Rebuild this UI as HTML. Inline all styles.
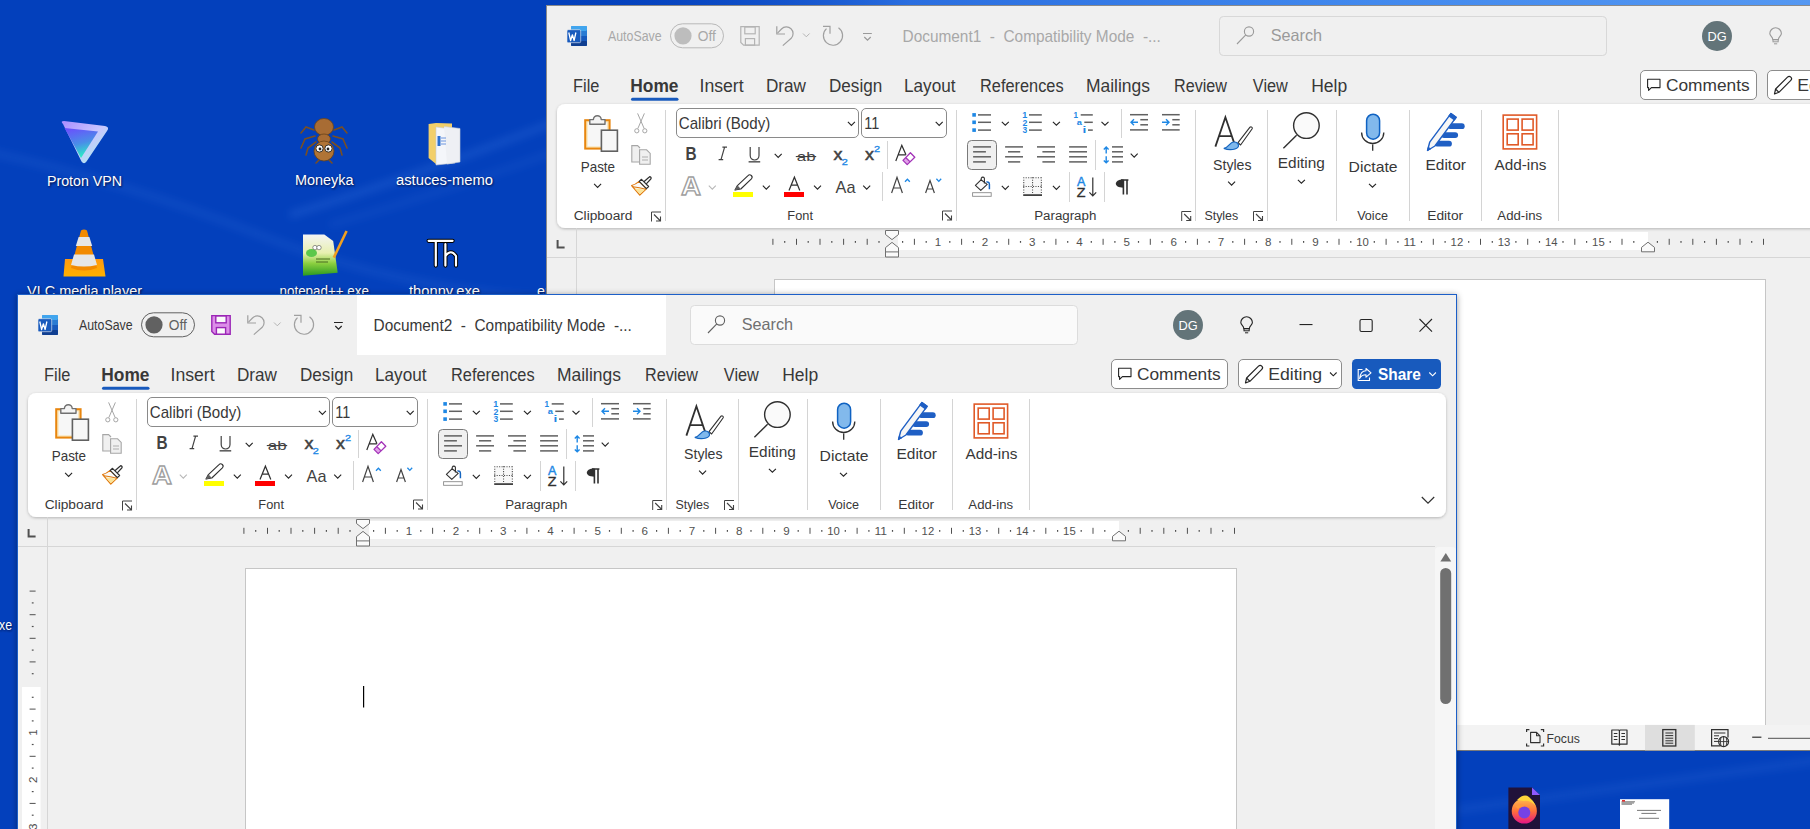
<!DOCTYPE html>
<html><head><meta charset="utf-8">
<style>
html,body{margin:0;padding:0;width:1810px;height:829px;overflow:hidden;}
body{position:relative;background:#0240ba;font-family:"Liberation Sans",sans-serif;}
#desk{position:absolute;left:0;top:0;width:1810px;height:829px;
 background:#0340bc;}
svg{position:absolute;left:0;top:0;}
text{font-family:"Liberation Sans",sans-serif;}
</style></head><body>
<div id="desk"></div>
<svg width="1810" height="829" viewBox="0 0 1810 829">
<defs>
<filter id="rsh" x="-5%" y="-20%" width="110%" height="140%"><feDropShadow dx="0" dy="1" stdDeviation="1.5" flood-color="#000" flood-opacity="0.25"/></filter>
<filter id="wsh" x="-5%" y="-5%" width="110%" height="110%"><feDropShadow dx="0" dy="1" stdDeviation="3" flood-color="#000" flood-opacity="0.4"/></filter>
<filter id="streak" x="-20%" y="-50%" width="140%" height="200%"><feGaussianBlur stdDeviation="4"/></filter>
<filter id="tsh" x="-10%" y="-40%" width="120%" height="180%"><feGaussianBlur stdDeviation="0.9"/></filter>
<linearGradient id="pv1" x1="0" y1="0" x2="1" y2="1"><stop offset="0" stop-color="#a98cff"/><stop offset="0.5" stop-color="#c9c6ff"/><stop offset="1" stop-color="#9ff5e6"/></linearGradient>
<linearGradient id="pv2" x1="0" y1="0" x2="0.3" y2="1"><stop offset="0" stop-color="#6d4aff"/><stop offset="0.6" stop-color="#4a8ee8"/><stop offset="1" stop-color="#2ce8c8"/></linearGradient>
<linearGradient id="vlc1" x1="0" y1="0" x2="0" y2="1"><stop offset="0" stop-color="#ff9a10"/><stop offset="1" stop-color="#ffb000"/></linearGradient>
<linearGradient id="npp" x1="0" y1="0" x2="0" y2="1"><stop offset="0" stop-color="#f4f4f4"/><stop offset="0.45" stop-color="#e8f0b0"/><stop offset="0.7" stop-color="#8cd040"/><stop offset="1" stop-color="#2a9a20"/></linearGradient>
<linearGradient id="ff1" x1="0" y1="0" x2="0" y2="1"><stop offset="0" stop-color="#ffbd4f"/><stop offset="0.5" stop-color="#ff7139"/><stop offset="1" stop-color="#e31587"/></linearGradient>
<radialGradient id="deskhi" cx="1810" cy="0" r="1250" gradientUnits="userSpaceOnUse" gradientTransform="translate(1810 0) scale(1 0.55) translate(-1810 0)"><stop offset="0" stop-color="#5598f2"/><stop offset="0.35" stop-color="#4289ee"/><stop offset="0.72" stop-color="#2a6ee0"/><stop offset="1" stop-color="#0642c0" stop-opacity="0"/></radialGradient>
<clipPath id="backclip"><rect x="547" y="6" width="1263" height="745"/></clipPath>
<clipPath id="frontclip"><rect x="18" y="295" width="1438" height="534"/></clipPath>
<g id="common">
<rect x="18" y="295" width="1438" height="900" fill="#f0f0f0"/>
<rect x="28" y="393" width="1418" height="124" rx="8" fill="#ffffff" filter="url(#rsh)"/>
<rect x="369" y="521" width="750" height="18" fill="#ffffff"/>
<rect x="18" y="546" width="1417" height="1" fill="#d6d6d6"/>
<rect x="47" y="517" width="1" height="600" fill="#d6d6d6"/>
<rect x="245.5" y="568.5" width="991" height="700" fill="#ffffff" stroke="#c6c6c6" stroke-width="1"/>
<rect x="42" y="315" width="16" height="20" rx="1.5" fill="#185abd"/>
<rect x="42" y="315" width="16" height="5" rx="1" fill="#41a5ee"/>
<rect x="42" y="320" width="16" height="5" fill="#2b7cd3"/>
<rect x="42" y="330" width="16" height="5" rx="1" fill="#103f91"/>
<rect x="38" y="318.7" width="13.7" height="13" rx="1.2" fill="#185abd" stroke="#f0f0f0" stroke-width="0.6"/>
<path d="M39.8 321.5 L41.6 329.5 L43.4 323.8 L45.1 329.5 L46.9 321.5" fill="none" stroke="#fff" stroke-width="1.3" stroke-linejoin="round"/>
<path d="M247.8 315.3 V323 H256" fill="none" stroke="#a0a0a0" stroke-width="1.2"/>
<path d="M248.5 322.2 L252.5 318 A6.6 6.6 0 0 1 262.2 327.3 L253.8 334.6" fill="none" stroke="#a0a0a0" stroke-width="1.2"/>
<path d="M274 322.5 L277.3 325.8 L280.6 322.5" fill="none" stroke="#b4b4b4" stroke-width="1"/>
<path d="M309.5 316.8 A9.6 9.6 0 1 1 297.5 317.6" fill="none" stroke="#a0a0a0" stroke-width="1.2"/>
<path d="M294 315.4 H301 V322.8" fill="none" stroke="#a0a0a0" stroke-width="1.2"/>
<rect x="690.5" y="305.5" width="387" height="39" rx="4" fill="#fafafa" stroke="#dcdcdc" stroke-width="1"/>
<circle cx="720" cy="320.5" r="4.6" fill="none" stroke="#616161" stroke-width="1.1"/>
<path d="M716.8 323.8 L708 333" fill="none" stroke="#616161" stroke-width="1.1"/>
<text x="741.663483953377" y="330" font-size="16.72" fill="#707070" textLength="51.4" lengthAdjust="spacingAndGlyphs">Search</text>
<circle cx="1188" cy="325" r="15" fill="#637479"/>
<text x="1178.5496183206105" y="330.1" font-size="13.37" fill="#ffffff" textLength="19.2" lengthAdjust="spacingAndGlyphs">DG</text>
<text x="44.05754685958566" y="381" font-size="17.44" fill="#383838" textLength="26.4" lengthAdjust="spacingAndGlyphs">File</text>
<text x="101.34063468903885" y="381" font-size="17.44" fill="#383838" font-weight="700" textLength="48.2" lengthAdjust="spacingAndGlyphs">Home</text>
<text x="170.47055713704756" y="381" font-size="17.44" fill="#383838" textLength="44.2" lengthAdjust="spacingAndGlyphs">Insert</text>
<text x="236.99514731369152" y="381" font-size="17.44" fill="#383838" textLength="40.0" lengthAdjust="spacingAndGlyphs">Draw</text>
<text x="299.9976950938426" y="381" font-size="17.44" fill="#383838" textLength="53.2" lengthAdjust="spacingAndGlyphs">Design</text>
<text x="374.99202145491114" y="381" font-size="17.44" fill="#383838" textLength="51.5" lengthAdjust="spacingAndGlyphs">Layout</text>
<text x="451.0600723291956" y="381" font-size="17.44" fill="#383838" textLength="83.5" lengthAdjust="spacingAndGlyphs">References</text>
<text x="556.9672627235213" y="381" font-size="17.44" fill="#383838" textLength="64.1" lengthAdjust="spacingAndGlyphs">Mailings</text>
<text x="644.9743589743589" y="381" font-size="17.44" fill="#383838" textLength="53.0" lengthAdjust="spacingAndGlyphs">Review</text>
<text x="723.8289740698985" y="381" font-size="17.44" fill="#383838" textLength="35.0" lengthAdjust="spacingAndGlyphs">View</text>
<text x="782.1653360282971" y="381" font-size="17.44" fill="#383838" textLength="36.0" lengthAdjust="spacingAndGlyphs">Help</text>
<rect x="102" y="386.8" width="47.5" height="3" rx="1.5" fill="#185abd"/>
<rect x="1111.5" y="359.5" width="116" height="29" rx="4.5" fill="#ffffff" stroke="#8c8c8c" stroke-width="1"/>
<path d="M1118.6 368.2 H1131 V376.6 H1122.4 L1119.6 379.4 V376.6 H1118.6 Z" fill="none" stroke="#242424" stroke-width="1.1" stroke-linejoin="round"/>
<text x="1136.920765195927" y="379.5" font-size="15.99" fill="#383838" textLength="83.7" lengthAdjust="spacingAndGlyphs">Comments</text>
<rect x="1238.5" y="359.5" width="103" height="29" rx="4.5" fill="#ffffff" stroke="#8c8c8c" stroke-width="1"/>
<path d="M1245.5 383 L1246.6 378 L1258.5 366.1 A2.3 2.3 0 0 1 1261.8 369.4 L1249.9 381.3 Z M1246.6 378 L1249.9 381.3" fill="none" stroke="#242424" stroke-width="1.2" stroke-linejoin="round"/>
<text x="1268.151626970815" y="379.5" font-size="15.99" fill="#383838" textLength="54.0" lengthAdjust="spacingAndGlyphs">Editing</text>
<path d="M1330 372.5 L1333.3 375.8 L1336.6 372.5" fill="none" stroke="#242424" stroke-width="1.1"/>
<rect x="56.2" y="409.2" width="24.4" height="28.4" fill="#fbe3b0" stroke="#e8860f" stroke-width="2"/>
<rect x="58.6" y="411.4" width="19.6" height="24" fill="#f7f7f7"/>
<path d="M60.8 413.2 V408.6 H64.4 A3.9 3.9 0 0 1 72.2 408.6 H76 V413.2 Z" fill="#f4f4f4" stroke="#707070" stroke-width="1.4" stroke-linejoin="round"/>
<rect x="72.4" y="419.2" width="16" height="21" fill="#f7f7f7" stroke="#616161" stroke-width="1.6"/>
<text x="51.6964242667738" y="460.7" font-size="14.97" fill="#383838" textLength="34.4" lengthAdjust="spacingAndGlyphs">Paste</text>
<path d="M65.1 472.9 L68.6 476.4 L72.1 472.9" fill="none" stroke="#242424" stroke-width="1.1"/>
<path d="M108.6 402.4 L115.2 417.6 M115.4 402.4 L108.8 417.6" fill="none" stroke="#a6a6a6" stroke-width="1"/>
<circle cx="107.8" cy="419.8" r="2.1" fill="none" stroke="#a6a6a6" stroke-width="1"/>
<circle cx="115.8" cy="419.8" r="2.1" fill="none" stroke="#a6a6a6" stroke-width="1"/>
<path d="M110 451 H102.8 V434.6 H108.6 L111 437" fill="#f0f0f0" stroke="#a6a6a6" stroke-width="1.1"/>
<path d="M110.6 438.8 H117.6 L121.2 442.4 V453.2 H110.6 Z" fill="#f0f0f0" stroke="#a6a6a6" stroke-width="1.1"/>
<path d="M113 446 H119 M113 449 H119" fill="none" stroke="#a6a6a6" stroke-width="0.9"/>
<path d="M110.2 470.4 Q106.4 473.6 102.6 474.5 L110.8 484 L117.4 477.7 Z" fill="#fafafa" stroke="#e07a10" stroke-width="1.2" stroke-linejoin="round"/>
<path d="M105.6 477.4 L110.8 483.2 L116 478.8 Q110.6 477.4 105.6 477.4 Z" fill="#fbe49a"/>
<path d="M103.8 475.8 Q110.4 476.6 117 478.2" fill="none" stroke="#e07a10" stroke-width="1.1"/>
<path d="M114.9 470.8 L120 466.2 A1.2 1.2 0 0 1 121.8 468 L117.3 472.8" fill="#ffffff" stroke="#303030" stroke-width="1.2" stroke-linejoin="round"/>
<path d="M110.2 470.4 L112.5 468.3 L119.6 475.5 L117.4 477.7 Z" fill="#ffffff" stroke="#303030" stroke-width="1.2" stroke-linejoin="round"/>
<text x="44.702602579132474" y="508.7" font-size="13.08" fill="#383838" textLength="58.8" lengthAdjust="spacingAndGlyphs">Clipboard</text>
<path d="M122.5 510.5 V501.0 H132" fill="none" stroke="#424242" stroke-width="1"/><path d="M125 503.5 L131.5 510.0 M127 510.0 H131.5 V505.5" fill="none" stroke="#424242" stroke-width="1.1"/>
<rect x="136" y="399" width="1" height="111" fill="#d4d4d4"/>
<rect x="147.5" y="397.5" width="182" height="29" rx="4.5" fill="#ffffff" stroke="#8a8a8a" stroke-width="1"/>
<text x="149.73285690816493" y="418.2" font-size="15.70" fill="#383838" textLength="91.5" lengthAdjust="spacingAndGlyphs">Calibri (Body)</text>
<path d="M318.9 410.9 L322.4 414.4 L325.9 410.9" fill="none" stroke="#242424" stroke-width="1.1"/>
<rect x="332.5" y="397.5" width="85" height="29" rx="4.5" fill="#ffffff" stroke="#8a8a8a" stroke-width="1"/>
<text x="335.37388724035605" y="418.2" font-size="15.70" fill="#383838" textLength="15.0" lengthAdjust="spacingAndGlyphs">11</text>
<path d="M406.7 410.9 L410.2 414.4 L413.7 410.9" fill="none" stroke="#242424" stroke-width="1.1"/>
<text x="156.5689351481185" y="448.7" font-size="18.02" fill="#424242" font-weight="700" textLength="11.1" lengthAdjust="spacingAndGlyphs">B</text>
<path d="M193.4 436.2 H198 M189.6 448.6 H194.2 M195.6 436.2 L192 448.6" fill="none" stroke="#424242" stroke-width="1.2"/>
<path d="M221.2 436 V444.6 A4.4 4.4 0 0 0 230 444.6 V436" fill="none" stroke="#424242" stroke-width="1.2"/>
<rect x="219.6" y="450" width="11.6" height="1.6" fill="#616161"/>
<path d="M245.7 442.9 L249.2 446.4 L252.7 442.9" fill="none" stroke="#242424" stroke-width="1.1"/>
<text x="267.88085510688836" y="450" font-size="13.37" fill="#424242" textLength="18.8" lengthAdjust="spacingAndGlyphs">ab</text>
<rect x="266.8" y="445" width="20.4" height="1.1" fill="#424242"/>
<text x="304.5979570990807" y="448.8" font-size="17.01" fill="#424242" textLength="9.0" lengthAdjust="spacingAndGlyphs" stroke="#424242" stroke-width="0.5">x</text>
<text x="312.64801714898175" y="453.8" font-size="8.43" fill="#1e88e5" textLength="6.1" lengthAdjust="spacingAndGlyphs" stroke="#1e88e5" stroke-width="0.3">2</text>
<text x="335.9979570990807" y="448.8" font-size="17.01" fill="#424242" textLength="9.0" lengthAdjust="spacingAndGlyphs" stroke="#424242" stroke-width="0.5">x</text>
<text x="344.94801714898176" y="440.6" font-size="8.43" fill="#1e88e5" textLength="6.1" lengthAdjust="spacingAndGlyphs" stroke="#1e88e5" stroke-width="0.3">2</text>
<rect x="358" y="430" width="1" height="28" fill="#d4d4d4"/>
<path d="M366.8 450 L372.8 434.4 L377 443.8 M369.4 443.8 H376.8" fill="none" stroke="#303030" stroke-width="1.2"/>
<path d="M374 449.4 L376.9 446.7 L380.9 450.6 L378.2 453.6 Z" fill="#e2a2ea"/>
<path d="M381.4 441.8 L385.8 446.2 L378.2 453.6 L374 449.4 Z M376.9 446.7 L380.9 450.6" fill="none" stroke="#a333b8" stroke-width="1.3" stroke-linejoin="round"/>
<text x="152.10960698689956" y="484.2" font-size="25.58" fill="#ffffff" font-weight="700" textLength="20.0" lengthAdjust="spacingAndGlyphs" stroke="#9e9e9e" stroke-width="1.3">A</text>
<path d="M179.8 474.6 L183.3 478.1 L186.8 474.6" fill="none" stroke="#b8b8b8" stroke-width="1.1"/>
<path d="M206 479 L208.4 474.6 L219 464.6 A1.9 1.9 0 0 1 222.4 467.8 L211.8 478 Z" fill="#ffffff" stroke="#303030" stroke-width="1.1" stroke-linejoin="round"/>
<path d="M205.4 479.6 L208.6 474.6 L211.6 477.8 Z" fill="#616161"/>
<rect x="204" y="481" width="20" height="5" fill="#ffff00"/>
<path d="M233.8 474.6 L237.3 478.1 L240.8 474.6" fill="none" stroke="#242424" stroke-width="1.1"/>
<path d="M260 479.4 L265.4 466.2 L270.8 479.4 M262.2 474.2 H268.6" fill="none" stroke="#303030" stroke-width="1.2"/>
<rect x="255" y="481" width="20" height="5" fill="#ff0000"/>
<path d="M285.0 474.6 L288.5 478.1 L292.0 474.6" fill="none" stroke="#242424" stroke-width="1.1"/>
<text x="306.56817273090763" y="482" font-size="17.15" fill="#424242" textLength="19.9" lengthAdjust="spacingAndGlyphs">Aa</text>
<path d="M334.2 474.6 L337.7 478.1 L341.2 474.6" fill="none" stroke="#242424" stroke-width="1.1"/>
<rect x="353" y="461" width="1" height="29" fill="#d4d4d4"/>
<path d="M362.6 482 L368 466.4 L373.4 482 M364.6 477 H371.4" fill="none" stroke="#424242" stroke-width="1.2"/>
<path d="M376 470.8 L378.4 468.2 L380.8 470.8" fill="none" stroke="#1e88e5" stroke-width="1.3"/>
<path d="M396.6 482 L401 469.6 L405.4 482 M398.2 478 H403.8" fill="none" stroke="#424242" stroke-width="1.2"/>
<path d="M407.4 467.8 L409.8 470.4 L412.2 467.8" fill="none" stroke="#1e88e5" stroke-width="1.3"/>
<text x="258.3486590038314" y="509" font-size="13.08" fill="#383838" textLength="25.6" lengthAdjust="spacingAndGlyphs">Font</text>
<path d="M413.5 509.5 V500.0 H423" fill="none" stroke="#424242" stroke-width="1"/><path d="M416 502.5 L422.5 509.0 M418 509.0 H422.5 V504.5" fill="none" stroke="#424242" stroke-width="1.1"/>
<rect x="427" y="399" width="1" height="111" fill="#d4d4d4"/>
<rect x="443.3" y="402.1" width="3.6" height="3.6" fill="#1e88e5"/>
<rect x="449" y="403.15" width="13.00" height="1.5" fill="#616161"/>
<rect x="443.3" y="409.5" width="3.6" height="3.6" fill="#1e88e5"/>
<rect x="449" y="410.55" width="13.00" height="1.5" fill="#616161"/>
<rect x="443.3" y="417.3" width="3.6" height="3.6" fill="#1e88e5"/>
<rect x="449" y="418.35" width="13.00" height="1.5" fill="#616161"/>
<path d="M472.8 410.8 L476.3 414.2 L479.8 410.8" fill="none" stroke="#242424" stroke-width="1.1"/>
<text x="493.2314795383001" y="407.2" font-size="9.59" fill="#1e88e5" font-weight="700" textLength="5.0" lengthAdjust="spacingAndGlyphs">1</text>
<rect x="500" y="403.15" width="12.80" height="1.5" fill="#616161"/>
<text x="493.4975659229209" y="414.6" font-size="9.59" fill="#1e88e5" font-weight="700" textLength="4.9" lengthAdjust="spacingAndGlyphs">2</text>
<rect x="500" y="410.55" width="12.80" height="1.5" fill="#616161"/>
<text x="493.60609037328095" y="422.40000000000003" font-size="9.59" fill="#1e88e5" font-weight="700" textLength="4.7" lengthAdjust="spacingAndGlyphs">3</text>
<rect x="500" y="418.35" width="12.80" height="1.5" fill="#616161"/>
<path d="M523.9 410.8 L527.4 414.2 L530.9 410.8" fill="none" stroke="#242424" stroke-width="1.1"/>
<text x="544.4856243441762" y="407.2" font-size="9.59" fill="#1e88e5" font-weight="700" textLength="4.5" lengthAdjust="spacingAndGlyphs">1</text>
<rect x="551.7" y="403.15" width="12.10" height="1.5" fill="#616161"/>
<text x="547.7252747252747" y="414.3" font-size="7.99" fill="#1e88e5" font-weight="700" textLength="5.2" lengthAdjust="spacingAndGlyphs">a</text>
<rect x="555.3" y="410.55" width="8.50" height="1.5" fill="#616161"/>
<text x="553.6330960854093" y="422.4" font-size="9.59" fill="#1e88e5" font-weight="700" textLength="3.8" lengthAdjust="spacingAndGlyphs">i</text>
<rect x="559" y="418.35" width="4.80" height="1.5" fill="#616161"/>
<path d="M572.5 410.8 L576.0 414.2 L579.5 410.8" fill="none" stroke="#242424" stroke-width="1.1"/>
<rect x="592" y="398" width="1" height="29" fill="#d4d4d4"/>
<rect x="601" y="402.95" width="18.00" height="1.5" fill="#616161"/>
<rect x="611.3" y="407.95" width="7.70" height="1.5" fill="#616161"/>
<rect x="611.3" y="413.05" width="7.70" height="1.5" fill="#616161"/>
<rect x="601" y="418.15" width="18.00" height="1.5" fill="#616161"/>
<path d="M609 411.2 H602 M605 408.2 L602 411.2 L605 414.2" fill="none" stroke="#1e88e5" stroke-width="1.4"/>
<rect x="633" y="402.95" width="17.70" height="1.5" fill="#616161"/>
<rect x="643.3" y="407.95" width="7.40" height="1.5" fill="#616161"/>
<rect x="643.3" y="413.05" width="7.40" height="1.5" fill="#616161"/>
<rect x="633" y="418.15" width="17.70" height="1.5" fill="#616161"/>
<path d="M633 411.2 H640 M637 408.2 L640 411.2 L637 414.2" fill="none" stroke="#1e88e5" stroke-width="1.4"/>
<rect x="438.5" y="429.5" width="29" height="29" rx="4" fill="#f0f0f0" stroke="#7a7a7a" stroke-width="1"/>
<rect x="444.1" y="435.15" width="17.90" height="1.5" fill="#616161"/>
<rect x="444.1" y="440.05" width="12.80" height="1.5" fill="#616161"/>
<rect x="444.1" y="445.05" width="17.90" height="1.5" fill="#616161"/>
<rect x="444.1" y="450.15" width="12.80" height="1.5" fill="#616161"/>
<rect x="476.1" y="435.15" width="17.90" height="1.5" fill="#616161"/>
<rect x="479" y="440.05" width="12.20" height="1.5" fill="#616161"/>
<rect x="476.1" y="445.05" width="17.90" height="1.5" fill="#616161"/>
<rect x="479" y="450.15" width="12.20" height="1.5" fill="#616161"/>
<rect x="508" y="435.15" width="18.00" height="1.5" fill="#616161"/>
<rect x="513.4" y="440.05" width="12.60" height="1.5" fill="#616161"/>
<rect x="508" y="445.05" width="18.00" height="1.5" fill="#616161"/>
<rect x="513.4" y="450.15" width="12.60" height="1.5" fill="#616161"/>
<rect x="540.1" y="435.15" width="17.90" height="1.5" fill="#616161"/>
<rect x="540.1" y="440.05" width="17.90" height="1.5" fill="#616161"/>
<rect x="540.1" y="445.05" width="17.90" height="1.5" fill="#616161"/>
<rect x="540.1" y="450.15" width="17.90" height="1.5" fill="#616161"/>
<rect x="566" y="429" width="1" height="30" fill="#d4d4d4"/>
<rect x="583" y="435.15" width="11.00" height="1.5" fill="#616161"/>
<rect x="583" y="440.05" width="11.00" height="1.5" fill="#616161"/>
<rect x="583" y="445.05" width="11.00" height="1.5" fill="#616161"/>
<rect x="583" y="450.15" width="11.00" height="1.5" fill="#616161"/>
<path d="M577.2 436.2 V442.6 M574.8 438.4 L577.2 436 L579.6 438.4 M577.2 445.2 V451.6 M574.8 449.4 L577.2 451.8 L579.6 449.4" fill="none" stroke="#1e88e5" stroke-width="1.4"/>
<path d="M601.7 442.6 L605.2 446.1 L608.7 442.6" fill="none" stroke="#242424" stroke-width="1.1"/>
<path d="M446.4 474.4 L452 468.8 L458.2 473.4 L451.8 479.4 Z" fill="#fafafa" stroke="#303030" stroke-width="1.1" stroke-linejoin="round"/>
<path d="M452 468.8 L452.4 467 A1.6 1.6 0 0 1 455.4 467.4 V472.6" fill="none" stroke="#303030" stroke-width="1.1"/>
<path d="M457.4 471 C459.2 470.6 460.4 471.6 460.4 473.4 V478.2" fill="none" stroke="#1565c0" stroke-width="1.5"/>
<rect x="443.6" y="481.7" width="18.6" height="3.6" fill="#ffffff" stroke="#8a8a8a" stroke-width="0.9"/>
<path d="M472.8 474.9 L476.3 478.4 L479.8 474.9" fill="none" stroke="#242424" stroke-width="1.1"/>
<rect x="494.5" y="466.5" width="18" height="17" fill="#f8f8f8"/>
<path d="M494.20 466.20h1.1v1.1h-1.1zM494.20 475.00h1.1v1.1h-1.1zM496.65 466.20h1.1v1.1h-1.1zM496.65 475.00h1.1v1.1h-1.1zM499.10 466.20h1.1v1.1h-1.1zM499.10 475.00h1.1v1.1h-1.1zM501.55 466.20h1.1v1.1h-1.1zM501.55 475.00h1.1v1.1h-1.1zM504.00 466.20h1.1v1.1h-1.1zM504.00 475.00h1.1v1.1h-1.1zM506.45 466.20h1.1v1.1h-1.1zM506.45 475.00h1.1v1.1h-1.1zM508.90 466.20h1.1v1.1h-1.1zM508.90 475.00h1.1v1.1h-1.1zM511.35 466.20h1.1v1.1h-1.1zM511.35 475.00h1.1v1.1h-1.1zM494.20 466.20h1.1v1.1h-1.1zM503.00 466.20h1.1v1.1h-1.1zM511.80 466.20h1.1v1.1h-1.1zM494.20 468.65h1.1v1.1h-1.1zM503.00 468.65h1.1v1.1h-1.1zM511.80 468.65h1.1v1.1h-1.1zM494.20 471.10h1.1v1.1h-1.1zM503.00 471.10h1.1v1.1h-1.1zM511.80 471.10h1.1v1.1h-1.1zM494.20 473.55h1.1v1.1h-1.1zM503.00 473.55h1.1v1.1h-1.1zM511.80 473.55h1.1v1.1h-1.1zM494.20 476.00h1.1v1.1h-1.1zM503.00 476.00h1.1v1.1h-1.1zM511.80 476.00h1.1v1.1h-1.1zM494.20 478.45h1.1v1.1h-1.1zM503.00 478.45h1.1v1.1h-1.1zM511.80 478.45h1.1v1.1h-1.1zM494.20 480.90h1.1v1.1h-1.1zM503.00 480.90h1.1v1.1h-1.1zM511.80 480.90h1.1v1.1h-1.1z" fill="#505050"/>
<rect x="494.2" y="483.2" width="18.8" height="1.8" fill="#424242"/>
<path d="M523.9 474.9 L527.4 478.4 L530.9 474.9" fill="none" stroke="#242424" stroke-width="1.1"/>
<rect x="540" y="461" width="1" height="30" fill="#d4d4d4"/>
<text x="547.9752577319588" y="474.8" font-size="12.21" fill="#1e88e5" textLength="8.4" lengthAdjust="spacingAndGlyphs" stroke="#1e88e5" stroke-width="0.4">A</text>
<text x="547.748128342246" y="485.5" font-size="11.92" fill="#303030" textLength="8.7" lengthAdjust="spacingAndGlyphs" stroke="#303030" stroke-width="0.3">Z</text>
<path d="M563.8 466.4 V485 M560.4 481.4 L563.8 485 L567.2 481.4" fill="none" stroke="#303030" stroke-width="1.2"/>
<rect x="575" y="461" width="1" height="30" fill="#d4d4d4"/>
<path d="M592 469 H599.4 M594.4 469 V483.6 M598 469 V483.6" fill="none" stroke="#303030" stroke-width="1.6"/>
<path d="M594.6 468.4 C589 468.4 586.8 470.6 586.8 472.6 C586.8 474.8 589 476.8 594.6 476.8 Z" fill="#303030"/>
<text x="505.2099859656699" y="508.8" font-size="13.08" fill="#383838" textLength="62.1" lengthAdjust="spacingAndGlyphs">Paragraph</text>
<path d="M652.7 510 V500.5 H662.2" fill="none" stroke="#424242" stroke-width="1"/><path d="M655.2 503 L661.7 509.5 M657.2 509.5 H661.7 V505" fill="none" stroke="#424242" stroke-width="1.1"/>
<rect x="666" y="399" width="1" height="111" fill="#d4d4d4"/>
<path d="M686.4 435.6 L696.4 406.2 L706.4 435.6 M690 425.2 H702.8" fill="none" stroke="#303030" stroke-width="1.8"/>
<path d="M709 431.6 L721 416.2 A1.4 1.4 0 0 1 723.2 417.8 L711.6 434 Z" fill="#ffffff" stroke="#303030" stroke-width="1.1" stroke-linejoin="round"/>
<path d="M694.8 437.4 C699.6 437.2 700.6 431.2 704.6 431 C707.8 430.8 710.2 433 709.4 435.4 C708.2 438.8 700.4 439.6 694.8 437.4 Z" fill="#7fb8ec" stroke="#1565c0" stroke-width="1.2"/>
<text x="684.058798521257" y="458.6" font-size="14.97" fill="#383838" textLength="38.5" lengthAdjust="spacingAndGlyphs">Styles</text>
<path d="M699.1 470.6 L702.6 474.1 L706.1 470.6" fill="none" stroke="#242424" stroke-width="1.1"/>
<text x="675.4361552680222" y="508.8" font-size="13.08" fill="#383838" textLength="33.8" lengthAdjust="spacingAndGlyphs">Styles</text>
<path d="M724.5 510 V500.5 H734" fill="none" stroke="#424242" stroke-width="1"/><path d="M727 503 L733.5 509.5 M729 509.5 H733.5 V505" fill="none" stroke="#424242" stroke-width="1.1"/>
<rect x="738" y="399" width="1" height="111" fill="#d4d4d4"/>
<circle cx="777.4" cy="414.6" r="12.8" fill="#fafafa" stroke="#303030" stroke-width="1.4"/>
<path d="M767.6 424.2 L754.4 437.2" fill="none" stroke="#303030" stroke-width="1.4"/>
<text x="748.8376048305938" y="456.6" font-size="14.97" fill="#383838" textLength="47.1" lengthAdjust="spacingAndGlyphs">Editing</text>
<path d="M768.9 468.8 L772.4 472.2 L775.9 468.8" fill="none" stroke="#242424" stroke-width="1.1"/>
<rect x="807" y="399" width="1" height="111" fill="#d4d4d4"/>
<rect x="837.6" y="403.2" width="13" height="25" rx="6.5" fill="#82b9ec" stroke="#0f62c2" stroke-width="1.5"/>
<path d="M832.6 421.4 A11.1 11.1 0 0 0 854.8 421.4 M843.7 433.4 V439.8" fill="none" stroke="#303030" stroke-width="1.3"/>
<text x="819.6114963205233" y="460.8" font-size="14.97" fill="#383838" textLength="48.9" lengthAdjust="spacingAndGlyphs">Dictate</text>
<path d="M840.0 472.8 L843.5 476.2 L847.0 472.8" fill="none" stroke="#242424" stroke-width="1.1"/>
<text x="828.1458889110094" y="509.3" font-size="13.08" fill="#383838" textLength="30.8" lengthAdjust="spacingAndGlyphs">Voice</text>
<rect x="880" y="399" width="1" height="111" fill="#d4d4d4"/>
<path d="M922 415.2 H932.8" fill="none" stroke="#1f5fc4" stroke-width="5.8" stroke-linecap="round"/>
<path d="M915 424.1 H926.2" fill="none" stroke="#1f5fc4" stroke-width="5.8" stroke-linecap="round"/>
<path d="M908.9 432.7 H920" fill="none" stroke="#1f5fc4" stroke-width="5.8" stroke-linecap="round"/>
<path d="M898.5 439.5 L900.7 431.2 L921.9 402.6 L927.1 406.4 L905.9 435 Z" fill="#f6f6f6" stroke="#1f5fc4" stroke-width="1.4" stroke-linejoin="round"/>
<path d="M921.9 402.6 L927.1 406.4 L925.3 408.8 L920.1 405 Z" fill="#1f5fc4" stroke="#1f5fc4" stroke-width="1.4" stroke-linejoin="round"/>
<path d="M898.5 439.5 L899.3 436.2 L901.6 437.9 Z" fill="#1f5fc4" stroke="#1f5fc4" stroke-width="1"/>
<text x="896.5305361305361" y="458.8" font-size="14.97" fill="#383838" textLength="40.4" lengthAdjust="spacingAndGlyphs">Editor</text>
<text x="898.2741258741258" y="509.3" font-size="13.08" fill="#383838" textLength="35.9" lengthAdjust="spacingAndGlyphs">Editor</text>
<rect x="952" y="399" width="1" height="111" fill="#d4d4d4"/>
<rect x="974.2" y="404.1" width="33.4" height="33.8" fill="none" stroke="#e05a28" stroke-width="1.6"/>
<rect x="978.2" y="408.1" width="11" height="11" fill="none" stroke="#e05a28" stroke-width="1.6"/>
<rect x="993.1" y="408.1" width="11" height="11" fill="none" stroke="#e05a28" stroke-width="1.6"/>
<rect x="978.2" y="422.8" width="11" height="11" fill="none" stroke="#e05a28" stroke-width="1.6"/>
<rect x="993.1" y="422.8" width="11" height="11" fill="none" stroke="#e05a28" stroke-width="1.6"/>
<text x="965.4700553451792" y="458.8" font-size="14.97" fill="#383838" textLength="52.0" lengthAdjust="spacingAndGlyphs">Add-ins</text>
<text x="968.3742499271774" y="509.3" font-size="13.08" fill="#383838" textLength="44.7" lengthAdjust="spacingAndGlyphs">Add-ins</text>
<rect x="1029" y="399" width="1" height="111" fill="#d4d4d4"/>
<path d="M28.6 529 V536.6 H35.6" fill="none" stroke="#505050" stroke-width="2"/>
<rect x="243.4" y="527.8" width="1" height="6" fill="#505050"/>
<rect x="255.1" y="530.0" width="1.2" height="1.8" fill="#505050"/>
<rect x="267.0" y="527.8" width="1" height="6" fill="#505050"/>
<rect x="278.6" y="530.0" width="1.2" height="1.8" fill="#505050"/>
<rect x="290.5" y="527.8" width="1" height="6" fill="#505050"/>
<rect x="302.2" y="530.0" width="1.2" height="1.8" fill="#505050"/>
<rect x="314.1" y="527.8" width="1" height="6" fill="#505050"/>
<rect x="325.8" y="530.0" width="1.2" height="1.8" fill="#505050"/>
<rect x="337.7" y="527.8" width="1" height="6" fill="#505050"/>
<rect x="349.4" y="530.0" width="1.2" height="1.8" fill="#505050"/>
<rect x="373.0" y="530.0" width="1.2" height="1.8" fill="#505050"/>
<rect x="384.9" y="527.8" width="1" height="6" fill="#505050"/>
<rect x="396.6" y="530.0" width="1.2" height="1.8" fill="#505050"/>
<text x="409.0" y="534.8" font-size="11.6" fill="#505050" text-anchor="middle">1</text>
<rect x="420.2" y="530.0" width="1.2" height="1.8" fill="#505050"/>
<rect x="432.1" y="527.8" width="1" height="6" fill="#505050"/>
<rect x="443.8" y="530.0" width="1.2" height="1.8" fill="#505050"/>
<text x="456.1" y="534.8" font-size="11.6" fill="#505050" text-anchor="middle">2</text>
<rect x="467.3" y="530.0" width="1.2" height="1.8" fill="#505050"/>
<rect x="479.2" y="527.8" width="1" height="6" fill="#505050"/>
<rect x="490.9" y="530.0" width="1.2" height="1.8" fill="#505050"/>
<text x="503.3" y="534.8" font-size="11.6" fill="#505050" text-anchor="middle">3</text>
<rect x="514.5" y="530.0" width="1.2" height="1.8" fill="#505050"/>
<rect x="526.4" y="527.8" width="1" height="6" fill="#505050"/>
<rect x="538.1" y="530.0" width="1.2" height="1.8" fill="#505050"/>
<text x="550.5" y="534.8" font-size="11.6" fill="#505050" text-anchor="middle">4</text>
<rect x="561.7" y="530.0" width="1.2" height="1.8" fill="#505050"/>
<rect x="573.6" y="527.8" width="1" height="6" fill="#505050"/>
<rect x="585.3" y="530.0" width="1.2" height="1.8" fill="#505050"/>
<text x="597.7" y="534.8" font-size="11.6" fill="#505050" text-anchor="middle">5</text>
<rect x="608.9" y="530.0" width="1.2" height="1.8" fill="#505050"/>
<rect x="620.8" y="527.8" width="1" height="6" fill="#505050"/>
<rect x="632.5" y="530.0" width="1.2" height="1.8" fill="#505050"/>
<text x="644.8" y="534.8" font-size="11.6" fill="#505050" text-anchor="middle">6</text>
<rect x="656.0" y="530.0" width="1.2" height="1.8" fill="#505050"/>
<rect x="667.9" y="527.8" width="1" height="6" fill="#505050"/>
<rect x="679.6" y="530.0" width="1.2" height="1.8" fill="#505050"/>
<text x="692.0" y="534.8" font-size="11.6" fill="#505050" text-anchor="middle">7</text>
<rect x="703.2" y="530.0" width="1.2" height="1.8" fill="#505050"/>
<rect x="715.1" y="527.8" width="1" height="6" fill="#505050"/>
<rect x="726.8" y="530.0" width="1.2" height="1.8" fill="#505050"/>
<text x="739.2" y="534.8" font-size="11.6" fill="#505050" text-anchor="middle">8</text>
<rect x="750.4" y="530.0" width="1.2" height="1.8" fill="#505050"/>
<rect x="762.3" y="527.8" width="1" height="6" fill="#505050"/>
<rect x="774.0" y="530.0" width="1.2" height="1.8" fill="#505050"/>
<text x="786.4" y="534.8" font-size="11.6" fill="#505050" text-anchor="middle">9</text>
<rect x="797.6" y="530.0" width="1.2" height="1.8" fill="#505050"/>
<rect x="809.5" y="527.8" width="1" height="6" fill="#505050"/>
<rect x="821.2" y="530.0" width="1.2" height="1.8" fill="#505050"/>
<text x="833.5" y="534.8" font-size="11.6" fill="#505050" text-anchor="middle" textLength="12.6" lengthAdjust="spacingAndGlyphs">10</text>
<rect x="844.7" y="530.0" width="1.2" height="1.8" fill="#505050"/>
<rect x="856.6" y="527.8" width="1" height="6" fill="#505050"/>
<rect x="868.3" y="530.0" width="1.2" height="1.8" fill="#505050"/>
<text x="880.7" y="534.8" font-size="11.6" fill="#505050" text-anchor="middle" textLength="12.6" lengthAdjust="spacingAndGlyphs">11</text>
<rect x="891.9" y="530.0" width="1.2" height="1.8" fill="#505050"/>
<rect x="903.8" y="527.8" width="1" height="6" fill="#505050"/>
<rect x="915.5" y="530.0" width="1.2" height="1.8" fill="#505050"/>
<text x="927.9" y="534.8" font-size="11.6" fill="#505050" text-anchor="middle" textLength="12.6" lengthAdjust="spacingAndGlyphs">12</text>
<rect x="939.1" y="530.0" width="1.2" height="1.8" fill="#505050"/>
<rect x="951.0" y="527.8" width="1" height="6" fill="#505050"/>
<rect x="962.7" y="530.0" width="1.2" height="1.8" fill="#505050"/>
<text x="975.1" y="534.8" font-size="11.6" fill="#505050" text-anchor="middle" textLength="12.6" lengthAdjust="spacingAndGlyphs">13</text>
<rect x="986.3" y="530.0" width="1.2" height="1.8" fill="#505050"/>
<rect x="998.2" y="527.8" width="1" height="6" fill="#505050"/>
<rect x="1009.9" y="530.0" width="1.2" height="1.8" fill="#505050"/>
<text x="1022.2" y="534.8" font-size="11.6" fill="#505050" text-anchor="middle" textLength="12.6" lengthAdjust="spacingAndGlyphs">14</text>
<rect x="1033.4" y="530.0" width="1.2" height="1.8" fill="#505050"/>
<rect x="1045.3" y="527.8" width="1" height="6" fill="#505050"/>
<rect x="1057.0" y="530.0" width="1.2" height="1.8" fill="#505050"/>
<text x="1069.4" y="534.8" font-size="11.6" fill="#505050" text-anchor="middle" textLength="12.6" lengthAdjust="spacingAndGlyphs">15</text>
<rect x="1080.6" y="530.0" width="1.2" height="1.8" fill="#505050"/>
<rect x="1092.5" y="527.8" width="1" height="6" fill="#505050"/>
<rect x="1104.2" y="530.0" width="1.2" height="1.8" fill="#505050"/>
<rect x="1127.8" y="530.0" width="1.2" height="1.8" fill="#505050"/>
<rect x="1139.7" y="527.8" width="1" height="6" fill="#505050"/>
<rect x="1151.4" y="530.0" width="1.2" height="1.8" fill="#505050"/>
<rect x="1163.3" y="527.8" width="1" height="6" fill="#505050"/>
<rect x="1175.0" y="530.0" width="1.2" height="1.8" fill="#505050"/>
<rect x="1186.9" y="527.8" width="1" height="6" fill="#505050"/>
<rect x="1198.6" y="530.0" width="1.2" height="1.8" fill="#505050"/>
<rect x="1210.5" y="527.8" width="1" height="6" fill="#505050"/>
<rect x="1222.1" y="530.0" width="1.2" height="1.8" fill="#505050"/>
<rect x="1234.0" y="527.8" width="1" height="6" fill="#505050"/>
<path d="M356.5 519.5 H369.5 V523.5 L363 528.6 L356.5 523.5 Z" fill="#fafafa" stroke="#707070" stroke-width="1"/>
<path d="M363 531.4 L369.5 536.6 V546 H356.5 V536.6 Z" fill="#fafafa" stroke="#707070" stroke-width="1"/>
<rect x="356.5" y="540.4" width="13" height="1" fill="#707070"/>
<path d="M1119 531.2 L1125.5 536.4 V540.8 H1112.5 V536.4 Z" fill="#fafafa" stroke="#707070" stroke-width="1"/>
<rect x="22" y="687" width="18.6" height="400" fill="#ffffff"/>
<rect x="29.6" y="590.6" width="6" height="1" fill="#505050"/>
<rect x="31.8" y="602.3" width="1.8" height="1.2" fill="#505050"/>
<rect x="29.6" y="614.2" width="6" height="1" fill="#505050"/>
<rect x="31.8" y="625.9" width="1.8" height="1.2" fill="#505050"/>
<rect x="29.6" y="637.8" width="6" height="1" fill="#505050"/>
<rect x="31.8" y="649.5" width="1.8" height="1.2" fill="#505050"/>
<rect x="29.6" y="661.4" width="6" height="1" fill="#505050"/>
<rect x="31.8" y="673.1" width="1.8" height="1.2" fill="#505050"/>
<rect x="31.8" y="696.7" width="1.8" height="1.2" fill="#505050"/>
<rect x="29.6" y="708.6" width="6" height="1" fill="#505050"/>
<rect x="31.8" y="720.3" width="1.8" height="1.2" fill="#505050"/>
<text x="0" y="0" font-size="11.6" fill="#505050" transform="translate(36.6 735.7) rotate(-90)">1</text>
<rect x="31.8" y="743.9" width="1.8" height="1.2" fill="#505050"/>
<rect x="29.6" y="755.8" width="6" height="1" fill="#505050"/>
<rect x="31.8" y="767.5" width="1.8" height="1.2" fill="#505050"/>
<text x="0" y="0" font-size="11.6" fill="#505050" transform="translate(36.6 782.9) rotate(-90)">2</text>
<rect x="31.8" y="791.0" width="1.8" height="1.2" fill="#505050"/>
<rect x="29.6" y="802.9" width="6" height="1" fill="#505050"/>
<rect x="31.8" y="814.6" width="1.8" height="1.2" fill="#505050"/>
<text x="0" y="0" font-size="11.6" fill="#505050" transform="translate(36.6 830.0) rotate(-90)">3</text>
<rect x="31.8" y="838.2" width="1.8" height="1.2" fill="#505050"/>
<rect x="29.6" y="850.1" width="6" height="1" fill="#505050"/>
<rect x="31.8" y="861.8" width="1.8" height="1.2" fill="#505050"/>
<text x="0" y="0" font-size="11.6" fill="#505050" transform="translate(36.6 877.2) rotate(-90)">4</text>
<rect x="31.8" y="885.4" width="1.8" height="1.2" fill="#505050"/>
<rect x="29.6" y="897.3" width="6" height="1" fill="#505050"/>
<rect x="31.8" y="909.0" width="1.8" height="1.2" fill="#505050"/>
<text x="0" y="0" font-size="11.6" fill="#505050" transform="translate(36.6 924.4) rotate(-90)">5</text>
<rect x="31.8" y="932.6" width="1.8" height="1.2" fill="#505050"/>
<rect x="29.6" y="944.5" width="6" height="1" fill="#505050"/>
<rect x="31.8" y="956.2" width="1.8" height="1.2" fill="#505050"/>
<text x="0" y="0" font-size="11.6" fill="#505050" transform="translate(36.6 971.5) rotate(-90)">6</text>
<rect x="31.8" y="979.7" width="1.8" height="1.2" fill="#505050"/>
<rect x="29.6" y="991.6" width="6" height="1" fill="#505050"/>
<rect x="31.8" y="1003.3" width="1.8" height="1.2" fill="#505050"/>
<text x="0" y="0" font-size="11.6" fill="#505050" transform="translate(36.6 1018.7) rotate(-90)">7</text>
<rect x="31.8" y="1026.9" width="1.8" height="1.2" fill="#505050"/>
</g>
</defs>
<rect x="0" y="0" width="1810" height="829" fill="url(#deskhi)"/>
<g filter="url(#streak)" fill="none" stroke="#6aa8ff"><path d="M-20 150 Q120 180 260 235 T560 300" stroke-width="5" stroke-opacity="0.16"/><path d="M290 215 Q420 175 560 120" stroke-width="5" stroke-opacity="0.22"/><path d="M330 225 Q450 190 560 150" stroke-width="3" stroke-opacity="0.18"/><path d="M1457 810 Q1600 790 1820 760" stroke-width="5" stroke-opacity="0.16"/></g>
<path d="M63 124 Q60 121 64 121 L105 126 Q110 127 107 131 L86.5 161.5 Q84 165 81.5 161.5 Z" fill="url(#pv1)"/>
<path d="M64.5 128 L98 131.5 L81 158 Z" fill="url(#pv2)"/>
<text x="47.8" y="186.5" font-size="14.24" fill="#000820" fill-opacity="0.85" textLength="75" lengthAdjust="spacingAndGlyphs" filter="url(#tsh)">Proton VPN</text><text x="47" y="185.6" font-size="14.24" fill="#ffffff" textLength="75" lengthAdjust="spacingAndGlyphs">Proton VPN</text>
<g fill="none" stroke="#7a4f22" stroke-width="1.6" stroke-linecap="round"><path d="M314 130 L306 127 L301 133"/><path d="M334 130 L342 127 L347 133"/><path d="M315 136 L305 139 L301 148"/><path d="M333 136 L343 139 L347 148"/><path d="M316 142 L308 148 L306 155"/><path d="M332 142 L340 148 L342 155"/><path d="M319 160 L316 163"/><path d="M329 160 L332 163"/></g>
<ellipse cx="324" cy="127" rx="9.5" ry="8.5" fill="#a86c34" stroke="#6a4218" stroke-width="0.8"/>
<ellipse cx="324" cy="139" rx="6.5" ry="5" fill="#a86c34" stroke="#6a4218" stroke-width="0.8"/>
<ellipse cx="324" cy="151" rx="10" ry="10" fill="#b07436" stroke="#6a4218" stroke-width="0.8"/>
<circle cx="319.5" cy="148.5" r="3.6" fill="#fff" stroke="#222" stroke-width="0.9"/><circle cx="328.5" cy="148.5" r="3.6" fill="#fff" stroke="#222" stroke-width="0.9"/>
<circle cx="320" cy="149" r="1.4" fill="#222"/><circle cx="328" cy="149" r="1.4" fill="#222"/>
<text x="295.8" y="185.9" font-size="14.24" fill="#000820" fill-opacity="0.85" textLength="58.6" lengthAdjust="spacingAndGlyphs" filter="url(#tsh)">Moneyka</text><text x="295" y="185" font-size="14.24" fill="#ffffff" textLength="58.6" lengthAdjust="spacingAndGlyphs">Moneyka</text>
<path d="M428.6 124 L436 123 L452 123.5 V131 H436 V164 L428.6 158 Z" fill="#f2cf6a"/>
<path d="M436 127 L455 129.5 V163 L436 165 Z" fill="#f4f6fa" stroke="#c8ccd4" stroke-width="0.6"/>
<path d="M444 126.5 L460 128.5 V162 L447 164" fill="#eef0f4" stroke="#c8ccd4" stroke-width="0.6"/>
<rect x="437.5" y="136" width="3" height="10" fill="#2b6fd0"/>
<path d="M441 138 H446 M441 141 H446 M441 144 H446" stroke="#4a7fd8" stroke-width="0.8"/>
<text x="396.8" y="185.9" font-size="14.24" fill="#000820" fill-opacity="0.85" textLength="97" lengthAdjust="spacingAndGlyphs" filter="url(#tsh)">astuces-memo</text><text x="396" y="185" font-size="14.24" fill="#ffffff" textLength="97" lengthAdjust="spacingAndGlyphs">astuces-memo</text>
<path d="M65 259 H103 L105.5 276.5 H63.5 Z" fill="url(#vlc1)"/>
<path d="M81 230.5 Q84 228.5 87 230.5 L97 268 Q84 273 71 268 Z" fill="#f28a00"/>
<path d="M78.6 237 H89.4 L92.2 246 H75.8 Z" fill="#e6e6e6"/>
<path d="M74 254.5 H94 L97 265 Q84 268 71 265 Z" fill="#e6e6e6"/>
<text x="27.8" y="297.09999999999997" font-size="14.24" fill="#000820" fill-opacity="0.85" textLength="115" lengthAdjust="spacingAndGlyphs" filter="url(#tsh)">VLC media player</text><text x="27" y="296.2" font-size="14.24" fill="#ffffff" textLength="115" lengthAdjust="spacingAndGlyphs">VLC media player</text>
<path d="M303 234.4 H324.3 L333.2 240.9 L337.7 272.7 L303 275.7 Z" fill="url(#npp)"/>
<ellipse cx="311.5" cy="253" rx="5.5" ry="4" fill="#5cc84a"/><circle cx="315" cy="247.6" r="2.2" fill="#fff" stroke="#333" stroke-width="0.5"/><circle cx="319" cy="247.6" r="2.2" fill="#fff" stroke="#333" stroke-width="0.5"/>
<path d="M316 259 H330 M316 262 H328" stroke="#4a6a20" stroke-width="1"/>
<path d="M333.8 257.6 L346.6 231" stroke="#f0a020" stroke-width="2.6"/>
<text x="280.3" y="297.09999999999997" font-size="14.24" fill="#000820" fill-opacity="0.85" textLength="89.5" lengthAdjust="spacingAndGlyphs" filter="url(#tsh)">notepad++.exe</text><text x="279.5" y="296.2" font-size="14.24" fill="#ffffff" textLength="89.5" lengthAdjust="spacingAndGlyphs">notepad++.exe</text>
<path d="M428.6 240.8 H452.6 M435.8 241.6 V265.6 M445.4 244 V265.6 M445.4 256 Q451 248.5 456 256 V265.6" fill="none" stroke="#000" stroke-width="4.2" stroke-linecap="round" stroke-linejoin="round"/>
<path d="M428.6 240.8 H452.6 M435.8 241.6 V265.6 M445.4 244 V265.6 M445.4 256 Q451 248.5 456 256 V265.6" fill="none" stroke="#fff" stroke-width="2.2" stroke-linecap="round" stroke-linejoin="round"/>
<text x="409.8" y="297.09999999999997" font-size="14.24" fill="#000820" fill-opacity="0.85" textLength="71" lengthAdjust="spacingAndGlyphs" filter="url(#tsh)">thonny.exe</text><text x="409" y="296.2" font-size="14.24" fill="#ffffff" textLength="71" lengthAdjust="spacingAndGlyphs">thonny.exe</text>
<text x="537.8" y="297.09999999999997" font-size="14.24" fill="#000820" fill-opacity="0.85" textLength="16" lengthAdjust="spacingAndGlyphs" filter="url(#tsh)">en</text><text x="537" y="296.2" font-size="14.24" fill="#ffffff" textLength="16" lengthAdjust="spacingAndGlyphs">en</text>
<text x="-0.19999999999999996" y="630.9" font-size="14.24" fill="#000820" fill-opacity="0.85" textLength="13" lengthAdjust="spacingAndGlyphs" filter="url(#tsh)">xe</text><text x="-1" y="630" font-size="14.24" fill="#ffffff" textLength="13" lengthAdjust="spacingAndGlyphs">xe</text>
<path d="M1508.4 787.4 H1532 L1540 795 V829 H1508.4 Z" fill="#20123a"/>
<path d="M1532 787.4 L1540 795 H1532 Z" fill="#9059ff"/>
<circle cx="1524.3" cy="811" r="12.6" fill="url(#ff1)"/>
<path d="M1517 800 Q1524 793 1529 797 Q1534 801 1536 806 Q1530 800 1524 801 Z" fill="#ffd43b"/>
<circle cx="1524.3" cy="812.4" r="6" fill="#7542e5"/>
<path d="M1515 806 Q1520 803 1526 806 Q1520 806 1518 809 Z" fill="#ff9a3c"/>
<rect x="1620" y="799.2" width="49.2" height="30" fill="#ffffff"/>
<path d="M1621.5 801.8 H1635 M1621.5 803 H1634 M1621.5 804.2 H1632 M1637 810.4 H1661 M1641.4 813.4 H1656.3 M1639 818.3 H1659" stroke="#555" stroke-width="0.8"/>
<rect x="1622" y="800" width="3" height="1.6" fill="#e03030"/>
<!-- back window -->
<rect x="546" y="5" width="1300" height="746" fill="#8a8a8a"/>
<g clip-path="url(#backclip)">
<g transform="translate(529,-289)">
<use href="#common"/>
</g>
<g transform="translate(529,-289)"><path d="M1243.8 328.6 C1243.8 326 1240.8 325 1240.8 322.6 A5.8 5.8 0 0 1 1252.4 322.6 C1252.4 325 1249.4 326 1249.4 328.6 Z" fill="none" stroke="#9a9a9a" stroke-width="1.1"/>
<rect x="1244" y="328.6" width="5.2" height="2.2" fill="none" stroke="#9a9a9a" stroke-width="1"/>
<rect x="1245" y="332.3" width="3.2" height="1" fill="#9a9a9a"/>
<path d="M334 322.5 H342.8 M335.3 326 L338.5 329.2 L341.7 326" fill="none" stroke="#9a9a9a" stroke-width="1.2"/>
<text x="78.97587070339176" y="330.4" font-size="14.53" fill="#a8a8a8" textLength="53.6" lengthAdjust="spacingAndGlyphs">AutoSave</text>
<rect x="141.5" y="312.8" width="53" height="24" rx="12" fill="none" stroke="#b8b8b8" stroke-width="1"/>
<circle cx="154" cy="324.8" r="8.6" fill="#bdbdbd"/>
<text x="168.85627607129314" y="330.4" font-size="14.53" fill="#a8a8a8" textLength="18.1" lengthAdjust="spacingAndGlyphs">Off</text>
<path d="M211.8 315.6 H230.2 V334.2 H214.6 L211.8 331.4 Z" fill="none" stroke="#b4b4b4" stroke-width="1.2"/>
<rect x="215.8" y="316" width="10.4" height="6.8" fill="none" stroke="#b4b4b4" stroke-width="1.2"/>
<rect x="216.4" y="327.6" width="9.2" height="6.6" fill="none" stroke="#b4b4b4" stroke-width="1.2"/>
<text x="373.53770356869893" y="331" font-size="15.70" fill="#a8a8a8" textLength="258.3" lengthAdjust="spacingAndGlyphs">Document1&#160;&#160;-&#160;&#160;Compatibility Mode&#160;&#160;-...</text>
<rect x="690.5" y="305.5" width="387" height="39" rx="4" fill="#f0f0f0" stroke="#d8d8d8" stroke-width="1"/>
<circle cx="720" cy="320.5" r="4.6" fill="none" stroke="#9a9a9a" stroke-width="1.1"/>
<path d="M716.8 323.8 L708 333" fill="none" stroke="#9a9a9a" stroke-width="1.1"/>
<text x="741.663483953377" y="330" font-size="16.72" fill="#9a9a9a" textLength="51.4" lengthAdjust="spacingAndGlyphs">Search</text></g>
<rect x="547" y="725" width="1263" height="25" fill="#f3f3f3"/>
<rect x="547" y="750" width="1263" height="1" fill="#7a7a7a"/>
<path d="M1526.6 732 V729.6 H1529.4 M1540.8 729.6 H1543.6 V732 M1543.6 743.6 V746 H1540.8 M1529.4 746 H1526.6 V743.6" fill="none" stroke="#303030" stroke-width="1.2"/>
<path d="M1530.6 732.4 H1536.6 L1540 735.8 V742.6 H1530.6 Z M1536.6 732.4 V735.8 H1540" fill="none" stroke="#303030" stroke-width="1.1" stroke-linejoin="round"/>
<text x="1546.5986129334583" y="742.8" font-size="13.08" fill="#383838" textLength="33.2" lengthAdjust="spacingAndGlyphs">Focus</text>
<path d="M1611.8 730 H1618.8 L1619.4 731 L1620 730 H1627 V744.2 H1620 L1619.4 745.2 L1618.8 744.2 H1611.8 Z M1619.4 731 V744.6" fill="none" stroke="#303030" stroke-width="1.2" stroke-linejoin="round"/>
<path d="M1613.8 733.5 H1617.4 M1613.8 736.5 H1617.4 M1613.8 739.5 H1617.4 M1621.4 733.5 H1625 M1621.4 736.5 H1625 M1621.4 739.5 H1625" stroke="#303030" stroke-width="1"/>
<rect x="1645" y="724.9" width="49.8" height="25.4" fill="#dedede"/>
<rect x="1662.8" y="729.6" width="13" height="16.4" fill="none" stroke="#303030" stroke-width="1.3"/>
<path d="M1665.4 733 H1673.2 M1665.4 735.6 H1673.2 M1665.4 738.2 H1673.2 M1665.4 740.8 H1673.2 M1665.4 743.2 H1673.2" stroke="#303030" stroke-width="1"/>
<path d="M1720.6 745.8 H1711.6 V729.6 H1728 V737.6" fill="none" stroke="#303030" stroke-width="1.2"/>
<path d="M1714 733 H1725.4 M1714 735.8 H1719 M1714 738.6 H1718 M1714 741.4 H1718" stroke="#303030" stroke-width="1"/>
<circle cx="1723.6" cy="741.6" r="5" fill="#f3f3f3" stroke="#303030" stroke-width="1.2"/>
<path d="M1718.6 741.6 H1728.6 M1723.6 736.6 V746.6 M1721 737.2 Q1719.6 741.6 1721 746 M1726.2 737.2 Q1727.6 741.6 1726.2 746" fill="none" stroke="#303030" stroke-width="0.9"/>
<rect x="1752.2" y="736.6" width="9.2" height="1.2" fill="#303030"/>
<rect x="1768" y="737.8" width="50" height="1" fill="#505050"/>
</g>
<!-- front window -->
<rect x="17" y="294" width="1440" height="600" fill="#1f5fc8" filter="url(#wsh)"/>
<g clip-path="url(#frontclip)">
<use href="#common"/>
<path d="M1243.8 328.6 C1243.8 326 1240.8 325 1240.8 322.6 A5.8 5.8 0 0 1 1252.4 322.6 C1252.4 325 1249.4 326 1249.4 328.6 Z" fill="none" stroke="#242424" stroke-width="1.1"/>
<rect x="1244" y="328.6" width="5.2" height="2.2" fill="none" stroke="#242424" stroke-width="1"/>
<rect x="1245" y="332.3" width="3.2" height="1" fill="#242424"/>
<path d="M334 322.5 H342.8 M335.3 326 L338.5 329.2 L341.7 326" fill="none" stroke="#242424" stroke-width="1.2"/>
<text x="78.97587070339176" y="330.4" font-size="14.53" fill="#383838" textLength="53.6" lengthAdjust="spacingAndGlyphs">AutoSave</text>
<rect x="141.5" y="312.8" width="53" height="24" rx="12" fill="none" stroke="#616161" stroke-width="1"/>
<circle cx="154" cy="324.8" r="8.6" fill="#616161"/>
<text x="168.85627607129314" y="330.4" font-size="14.53" fill="#616161" textLength="18.1" lengthAdjust="spacingAndGlyphs">Off</text>
<path d="M211.8 315.6 H230.2 V334.2 H214.6 L211.8 331.4 Z" fill="#dc8ee8" stroke="#9b26b6" stroke-width="1.4"/>
<rect x="215.8" y="316" width="10.4" height="6.8" fill="#fafafa" stroke="#9b26b6" stroke-width="1.4"/>
<rect x="216.4" y="327.6" width="9.2" height="6.6" fill="#fafafa" stroke="#9b26b6" stroke-width="1.4"/>
<rect x="357" y="295" width="309" height="60" fill="#ffffff"/>
<text x="373.53770356869893" y="331" font-size="15.70" fill="#383838" textLength="258.3" lengthAdjust="spacingAndGlyphs">Document2&#160;&#160;-&#160;&#160;Compatibility Mode&#160;&#160;-...</text>
<rect x="1299.5" y="324" width="13" height="1.1" fill="#242424"/>
<rect x="1360" y="319.5" width="12.2" height="12" rx="1.5" fill="none" stroke="#242424" stroke-width="1.1"/>
<path d="M1419.5 319 L1432 331.6 M1432 319 L1419.5 331.6" fill="none" stroke="#242424" stroke-width="1.1"/>
<rect x="1352" y="359" width="89" height="30" rx="4.5" fill="#185abd"/>
<path d="M1366 368.5 L1371 372.8 L1366 377.2 V374.8 C1363 374.8 1361 375.8 1359.6 378.6 C1360.2 373.6 1362.6 370.8 1366 370.8 Z" fill="none" stroke="#ffffff" stroke-width="1.1" stroke-linejoin="round"/>
<path d="M1362.5 369.5 H1358.2 V380.5 H1369.5 V377.5" fill="none" stroke="#ffffff" stroke-width="1.1"/>
<text x="1377.9566780514112" y="379.5" font-size="15.99" fill="#ffffff" font-weight="600" textLength="42.8" lengthAdjust="spacingAndGlyphs">Share</text>
<path d="M1429.3 372.5 L1432.6 375.8 L1435.9 372.5" fill="none" stroke="#ffffff" stroke-width="1.1"/>
<path d="M1421.8 497 L1428 503.2 L1434.2 497" fill="none" stroke="#303030" stroke-width="1.2"/>
<rect x="1435" y="547" width="21" height="300" rx="4" fill="#f6f6f6"/>
<path d="M1445.8 553 L1451.2 561.4 H1440.4 Z" fill="#707070"/>
<rect x="1440.2" y="568" width="11" height="136" rx="5.5" fill="#707070"/>
<rect x="363" y="686" width="1.2" height="21.5" fill="#000000"/>
</g>
</svg>
</body></html>
